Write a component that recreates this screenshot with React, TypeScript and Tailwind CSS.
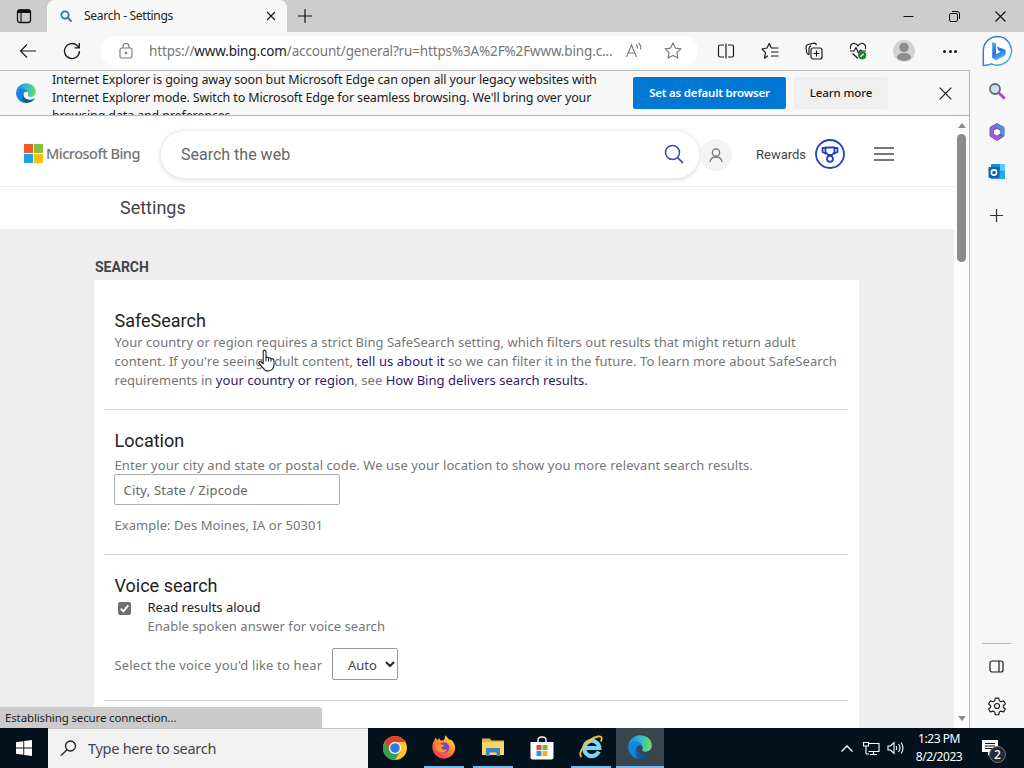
import type { ReactNode } from 'react';

function Svg({ size, children, className = '' }: { size: number; children: ReactNode; className?: string }) {
    return (
        <svg width={size} height={size} viewBox="0 0 24 24" fill="none" stroke="currentColor" strokeWidth="1.4" strokeLinecap="round" strokeLinejoin="round" className={`shrink-0 ${className}`}>
            {children}
        </svg>
    );
}

function EdgeLogo({ size, id }: { size: number; id: string }) {
    return (
        <svg width={size} height={size} viewBox="0 0 24 24" className="shrink-0">
            <defs>
                <linearGradient id={`${id}-top`} x1="1" y1="9" x2="23" y2="10" gradientUnits="userSpaceOnUse">
                    <stop offset="0" stopColor="#1f8fe0" />
                    <stop offset="0.5" stopColor="#2cbcd0" />
                    <stop offset="1" stopColor="#6ade63" />
                </linearGradient>
                <linearGradient id={`${id}-low`} x1="3" y1="10" x2="19" y2="22" gradientUnits="userSpaceOnUse">
                    <stop offset="0" stopColor="#0f78d8" />
                    <stop offset="1" stopColor="#114a8b" />
                </linearGradient>
            </defs>
            <path d="M0.3 11C1 4.5 6 0.2 12 0.2c7 0 11.8 4.6 11.8 10.3 0 4-2.900 6.200-6.400 6.200-2.700 0-3.800-1-3.100-2.200.6-1 .6-2.800-.5-4.300C12 7.700 9 6.500 6 7.100 3.300 7.600 1 9 .3 11z" fill={`url(#${id}-top)`} />
            <path d="M.3 11C1.500 7.500 5 6 8.500 6.800c3.200.7 5.200 2.700 5.500 4.700-1-1.300-3-1.700-4.200-.2-1.800 2.300-.5 6.500 3.200 8 3 1.200 6.600.8 9.200-.8.4-.2.7.1.4.5C20.200 22.300 16.500 24 12.500 23.900 5.500 23.700-.3 18 .3 11z" fill={`url(#${id}-low)`} />
            <path d="M.3 11C1.500 7.500 5 6 8.500 6.800c3.200.7 5.200 2.700 5.500 4.700-1-1.300-3-1.700-4.200-.2C6.500 13 6 20 10.300 23.700 4.200 23-.3 17.500.3 11z" fill="#168de2" opacity="0.75" />
        </svg>
    );
}

function BingChatLogo() {
    return (
        <svg width="32" height="32" viewBox="0 0 32 32">
            <defs>
                <linearGradient id="bubble" x1="2" y1="4" x2="30" y2="26" gradientUnits="userSpaceOnUse">
                    <stop offset="0" stopColor="#4d6fb5" />
                    <stop offset="0.5" stopColor="#3d7fd6" />
                    <stop offset="1" stopColor="#42c3c4" />
                </linearGradient>
                <linearGradient id="bee" x1="11" y1="7" x2="21" y2="25" gradientUnits="userSpaceOnUse">
                    <stop offset="0" stopColor="#35b6f4" />
                    <stop offset="0.55" stopColor="#2a6fe0" />
                    <stop offset="1" stopColor="#52c6f2" />
                </linearGradient>
            </defs>
            <path d="M16.500 1.500a14.300 14.300 0 1 1-6 27.400c-2 .9-5 1.600-8.200 1.500V16A14.400 14.400 0 0 1 16.500 1.500z" fill="#fdfeff" stroke="url(#bubble)" strokeWidth="1.500" />
            <path d="M11.200 7l3.800 1.400v10.800l5-2.500-2.700-1.200-1.400-3.900 7.600 2.800c1.200.6 1.500 1.800 1.400 3.400-.1 1.700-1 2.700-2 3.400L15 25.200l-3.800-2.300z" fill="url(#bee)" />
        </svg>
    );
}

function MsSquares({ size }: { size: number }) {
    return (
        <svg width={size} height={size} viewBox="0 0 19 19" className="shrink-0">
            <path fill="#f0592a" d="M0 0h9v9H0z" />
            <path fill="#87c13c" d="M10 0h9v9h-9z" />
            <path fill="#17a4e4" d="M0 10h9v9H0z" />
            <path fill="#fbbf12" d="M10 10h9v9h-9z" />
        </svg>
    );
}

function TitleBar() {
    return (
        <div className="flex h-8 bg-[#cdcdcd] text-black">
            <div className="flex w-[47px] items-center justify-center rounded-br-md">
                <svg width="16" height="16" viewBox="0 0 16 16">
                    <rect x="1.500" y="2" width="13" height="12.500" rx="2" fill="none" stroke="#111" strokeWidth="1.300" />
                    <path d="M1.500 5V3.500Q1.500 1.500 3.500 1.500h9q2 0 2 2V5z" fill="#111" />
                    <path d="M5 5v9.500" stroke="#111" strokeWidth="1.200" />
                </svg>
            </div>
            <div className="flex h-8 w-60 items-center rounded-t-lg bg-[#f7f7f7] pl-3">
                <svg width="14" height="14" viewBox="0 0 14 14" fill="none" stroke="#257a9d" strokeWidth="1.800">
                    <circle cx="6" cy="6" r="3.600" />
                    <path d="M8.700 8.700L12 12" strokeLinecap="round" />
                </svg>
                <span className="ml-[11px] w-[182px] text-[12px] tracking-[-0.28px] text-[#222]">Search - Settings</span>
                <svg width="10" height="10" viewBox="0 0 10 10" stroke="#111" strokeWidth="1.100">
                    <path d="M1 1l8 8M9 1L1 9" />
                </svg>
            </div>
            <div className="flex w-9 items-center justify-center">
                <svg width="14" height="14" viewBox="0 0 14 14" stroke="#111" strokeWidth="1.200">
                    <path d="M7 0v14M0 7h14" />
                </svg>
            </div>
            <div className="ml-auto flex items-center gap-[35px] pr-[18px]">
                <svg width="11" height="11" viewBox="0 0 11 11" stroke="#111">
                    <path d="M.5 5.500h10" />
                </svg>
                <svg width="11" height="11" viewBox="0 0 11 11" fill="none" stroke="#111">
                    <rect x=".5" y="2.500" width="8" height="8" rx="1.500" />
                    <path d="M3 .5h5q2.500 0 2.500 2.500v5" />
                </svg>
                <svg width="11" height="11" viewBox="0 0 11 11" stroke="#111" strokeWidth="1.100">
                    <path d="M.5.5l10 10M10.500.5l-10 10" />
                </svg>
            </div>
        </div>
    );
}

function Toolbar() {
    return (
        <div className="flex h-[39px] items-center border-b border-[#b9b9b9] text-[#1b1b1b]">
            <svg width="18" height="16" viewBox="0 0 18 16" fill="none" stroke="#1b1b1b" strokeWidth="1.200" className="ml-[19px]">
                <path d="M17 8H1.500M8 1.500L1.500 8 8 14.500" />
            </svg>
            <svg width="18" height="18" viewBox="0 0 18 18" fill="none" stroke="#1b1b1b" strokeWidth="1.300" className="ml-[26px]">
                <path d="M16.500 9A7.500 7.500 0 1 1 14.300 3.700L16 5.400M16.300 1v4.800h-4.800" />
            </svg>
            <div className="ml-5 flex h-[30px] w-[597px] items-center rounded-full bg-white">
                <svg width="14" height="16" viewBox="0 0 14 16" fill="none" stroke="#777" strokeWidth="1.100" className="ml-[18px]">
                    <rect x="1" y="5" width="12" height="10" rx="1.800" />
                    <path d="M4 5V3.500a3 3 0 0 1 6 0V5" />
                    <circle cx="7" cy="10" r=".7" fill="#777" />
                </svg>
                <span className="ml-4 w-[464px] text-[13.5px] tracking-[-0.15px] whitespace-nowrap text-[#767676]">
                    https://<span className="text-[#1b1b1b]">www.bing.com</span>/account/general?ru=https%3A%2F%2Fwww.bing.c...
                </span>
                <svg width="18" height="18" viewBox="0 0 18 18" fill="none" stroke="#777" strokeWidth="1.100" className="ml-3">
                    <path d="M1.500 15L6.500 3l5 12M3.300 11h6.500M11 2.500q2 1.500 1.500 4M13.500 1q3 2.500 2 6.500" />
                </svg>
                <Svg size={20} className="ml-5 text-[#777]">
                    <path d="M12 2.500l2.900 6 6.600.9-4.800 4.600 1.200 6.500L12 17.300l-5.900 3.200L7.300 14 2.500 9.400l6.600-.9z" />
                </Svg>
            </div>
            <svg width="18" height="16" viewBox="0 0 18 16" fill="none" stroke="#1b1b1b" strokeWidth="1.200" className="ml-[19px]">
                <path d="M7 2H3Q1.500 2 1.500 3.500v9Q1.500 14 3 14h4M11 2h4q1.500 0 1.500 1.500v9Q16.500 14 15 14h-4M9 .5v15" />
            </svg>
            <svg width="18" height="18" viewBox="0 0 18 18" fill="none" stroke="#1b1b1b" strokeWidth="1.200" className="ml-[26px]">
                <path d="M6.500 14L3.500 16.200l1-5.500L1 7l5-1 2.200-4.500L10.300 6H17M10.500 10H17M10.500 14H17" strokeLinecap="round" strokeLinejoin="round" />
            </svg>
            <svg width="18" height="18" viewBox="0 0 18 18" fill="none" stroke="#1b1b1b" strokeWidth="1.200" className="ml-[26px]">
                <rect x="6" y="6" width="11" height="11" rx="2" />
                <path d="M11.500 8.500v6M8.500 11.500h6M3.500 12.500Q2 12 1.700 10.500L1 5Q1 3 3 2.500L9 1.200q2-.2 2.500 2M6 3.500Q4 5 4 7v6" />
            </svg>
            <svg width="18" height="18" viewBox="0 0 18 18" fill="none" stroke="#1b1b1b" strokeWidth="1.200" className="ml-[26px]">
                <path d="M1.500 7C.5 3.500 3 1 5.500 1.500 7.500 1.700 8.500 3 9 4c.5-1 1.500-2.300 3.500-2.500C15 1 17.500 3.500 16.500 7M1 9h4l2-3.500L9.500 11l2-3 1 1H17M3.500 11.500L9 16.500" strokeLinejoin="round" />
                <circle cx="13.200" cy="13.300" r="4.100" fill="#16853a" stroke="none" />
                <path d="M11.500 14.700l3.200-3" stroke="#fff" />
            </svg>
            <svg width="22" height="22" viewBox="0 0 22 22" className="ml-[26px]">
                <circle cx="11" cy="11" r="11" fill="#d2d2d2" />
                <circle cx="11" cy="7.500" r="4.700" fill="#8c8c8c" />
                <ellipse cx="11" cy="17" rx="7" ry="3.900" fill="#8c8c8c" />
            </svg>
            <div className="ml-7 flex gap-[2.500px]">
                <i className="size-[3px] rounded-full bg-[#1b1b1b]" />
                <i className="size-[3px] rounded-full bg-[#1b1b1b]" />
                <i className="size-[3px] rounded-full bg-[#1b1b1b]" />
            </div>
        </div>
    );
}

function InfoBar() {
    return (
        <div className="flex h-[45px] items-center overflow-hidden border-b border-[#b5b5b5] bg-[#f7f7f7]">
            <div className="ml-4">
                <EdgeLogo size={20} id="bar" />
            </div>
            <p className="ml-4 h-11 w-[581px] text-[12.5px] leading-[18px] tracking-[-0.14px] whitespace-nowrap text-[#1b1b1b]">
                Internet Explorer is going away soon but Microsoft Edge can open all your legacy websites with
                <br />
                Internet Explorer mode. Switch to Microsoft Edge for seamless browsing. We'll bring over your
                <br />
                browsing data and preferences.
            </p>
            <button className="h-8 w-[153px] rounded-[2px] bg-[#0078d4] text-[11.5px] font-semibold tracking-[-0.2px] whitespace-nowrap text-white">Set as default browser</button>
            <button className="ml-2 h-8 w-[94px] rounded-[2px] bg-[#efefef] text-[11.5px] font-medium tracking-[-0.1px] whitespace-nowrap text-[#1b1b1b]">Learn more</button>
            <svg width="13" height="13" viewBox="0 0 13 13" stroke="#1b1b1b" strokeWidth="1.200" className="ml-[51px]">
                <path d="M.7.7l11.600 11.600M12.300.7L.7 12.300" />
            </svg>
        </div>
    );
}

function BingHeader() {
    return (
        <header className="flex h-[71px] items-center border-b border-[#ececec] bg-white">
            <div className="mt-[5px] ml-6">
                <MsSquares size={19} />
            </div>
            <span className="mt-[6px] ml-[3px] w-[94px] text-[14.5px] font-medium tracking-[-0.5px] whitespace-nowrap text-[#737373]">Microsoft Bing</span>
            <div className="mt-[6px] ml-5 flex h-[49px] w-[540px] items-center rounded-full border border-[#eee] bg-white pl-5 shadow-[0_1px_4px_rgba(0,0,0,0.14)]">
                <span className="mt-px w-[483px] font-[Roboto] text-[16px] text-[#666]">Search the web</span>
                <svg width="20" height="20" viewBox="0 0 20 20" fill="none" stroke="#3547b5" strokeWidth="1.500">
                    <circle cx="8.500" cy="8.500" r="7" />
                    <path d="M13.600 13.600l5 5" strokeLinecap="round" />
                </svg>
            </div>
            <div className="mt-[8px] flex size-8 items-center justify-center rounded-full bg-[#f3f3f3]">
                <svg width="16" height="16" viewBox="0 0 16 16" fill="none" stroke="#777" strokeWidth="1.300">
                    <circle cx="8" cy="5.500" r="3.700" />
                    <path d="M2 15c.5-3.500 3-5 6-5s5.500 1.500 6 5" />
                </svg>
            </div>
            <span className="mt-[8px] ml-6 w-[51px] font-[Roboto] text-[13px] text-[#444]">Rewards</span>
            <svg width="30" height="30" viewBox="0 0 30 30" fill="none" stroke="#2440c0" strokeWidth="1.800" className="mt-[6px] ml-2">
                <circle cx="15" cy="15" r="14" />
                <path d="M10.500 8.500h9v4.500l-2.500 3h-4l-2.500-3zM10.500 9H7.500v4l4 2M19.500 9h3v4l-4 2" strokeLinejoin="round" />
                <circle cx="15" cy="19.800" r="3" />
            </svg>
            <div className="mt-[6px] ml-[29px] flex w-5 flex-col gap-[4px]">
                <i className="h-[2px] bg-[#777]" />
                <i className="h-[2px] bg-[#777]" />
                <i className="h-[2px] bg-[#777]" />
            </div>
        </header>
    );
}

function SettingsPage() {
    return (
        <div className="w-[954px] shrink-0">
            <BingHeader />
            <div className="flex h-[42px] items-center bg-white pb-px pl-[120px] font-[Roboto] text-[18px] text-[#444]">Settings</div>
            <main className="h-[511px] rounded-tr bg-[#eee] pl-[94px]">
                <h2 className="h-[51px] pt-[28px] pl-px font-[Roboto] text-[14px] leading-5 font-bold text-[#444]">SEARCH</h2>
                <div className="w-[765px] bg-white pr-[11px] pl-[10px] text-[13px] leading-[19px] text-[#767676]">
                    <section className="h-[130px] border-b border-[#d4d4d4] pt-[29px] pl-[10.5px] whitespace-nowrap">
                        <h3 className="font-[Roboto] text-[18px] leading-6 text-[#222]">SafeSearch</h3>
                        <p className="tracking-[0.03px]">Your country or region requires a strict Bing SafeSearch setting, which filters out results that might return adult</p>
                        <p className="tracking-[0.07px]">
                            content. If you're seeing adult content, <a className="text-[#2f1770]">tell us about it</a> so we can filter it in the future. To learn more about SafeSearch
                        </p>
                        <p className="tracking-[0.03px]">
                            requirements in <a className="text-[#2f1770]">your country or region</a>, see <a className="text-[#2f1770]">How Bing delivers search results.</a>
                        </p>
                    </section>
                    <section className="h-[145px] border-b border-[#d4d4d4] pt-[19px] pl-[10.5px]">
                        <h3 className="font-[Roboto] text-[18px] leading-6 text-[#222]">Location</h3>
                        <p className="pt-[3px] tracking-[0.075px] whitespace-nowrap">Enter your city and state or postal code. We use your location to show you more relevant search results.</p>
                        <div className="-mt-px -ml-px flex h-[31px] w-[226px] items-center rounded-[2px] border border-[#adadad] bg-white pt-px pl-[9px] tracking-[0.2px] text-[#666]">City, State / Zipcode</div>
                        <p className="mt-[11px] tracking-[0.05px]">Example: Des Moines, IA or 50301</p>
                    </section>
                    <section className="h-[146px] border-b border-[#d4d4d4] pt-[19px] pl-[10.5px]">
                        <h3 className="font-[Roboto] text-[18px] leading-6 text-[#222]">Voice search</h3>
                        <div className="flex">
                            <svg width="13" height="13" viewBox="0 0 13 13" className="mt-1 ml-[3px]">
                                <rect width="13" height="13" rx="2" fill="#707070" />
                                <path d="M2.700 6.700l2.600 2.600 5-6" fill="none" stroke="#fff" strokeWidth="1.800" />
                            </svg>
                            <div className="ml-[17px]">
                                <p className="text-[#222]">Read results aloud</p>
                                <p className="tracking-[0.03px]">Enable spoken answer for voice search</p>
                            </div>
                        </div>
                        <div className="mt-3 flex items-center">
                            <span className="w-[217.5px] pt-[3px] tracking-[0.16px] whitespace-nowrap">Select the voice you'd like to hear</span>
                            <div className="flex h-8 w-[66px] items-center rounded-[2px] border border-[#999] pl-[15px] text-[#444]">
                                <span className="w-[37px] pt-[3px]">Auto</span>
                                <svg width="10" height="7" viewBox="0 0 10 7" fill="none" stroke="#222" strokeWidth="2">
                                    <path d="M1 1l4 4 4-4" />
                                </svg>
                            </div>
                        </div>
                    </section>
                    <div className="h-10" />
                </div>
            </main>
        </div>
    );
}

function Scrollbar() {
    return (
        <div className="flex w-[15px] flex-col items-center bg-[#fcfcfc] pt-[7px] pb-[7px]">
            <svg width="8" height="5" viewBox="0 0 8 5">
                <path d="M0 5l4-5 4 5z" fill="#8b8b8b" />
            </svg>
            <div className="mt-[6px] h-[128px] w-[9px] rounded-full bg-[#8b8b8b]" />
            <svg width="8" height="5" viewBox="0 0 8 5" className="mt-auto">
                <path d="M0 0l4 5 4-5z" fill="#8b8b8b" />
            </svg>
        </div>
    );
}

function Sidebar() {
    return (
        <aside className="flex w-[54px] flex-col items-center bg-[#f7f7f7] pt-[3px] pr-px">
            <BingChatLogo />
            <svg width="18" height="18" viewBox="0 0 18 18" fill="none" className="mt-[15px]">
                <path d="M10.500 10.500l2 2" stroke="#666" strokeWidth="2" />
                <path d="M12 12l3.800 3.800" stroke="#b044d8" strokeWidth="3" strokeLinecap="round" />
                <circle cx="7" cy="7" r="5" fill="#cde0ea" stroke="#666a70" strokeWidth="1.800" />
            </svg>
            <svg width="18" height="18" viewBox="0 0 18 18" className="mt-[23px]">
                <path d="M9 .5l7 4v8.500L9 17.500 2 13V4.500z" fill="#5359c5" stroke="#5359c5" strokeLinejoin="round" />
                <path d="M2 5L9 .7l2 1.300-4.500 4v6L2 13z" fill="#8c65cf" />
                <path d="M9 .5l7 4V13l-4-2V6L7 4z" fill="#4f8fdb" />
                <path d="M2 13l4.500-2L12 13l4-1-7 5.500z" fill="#a85bd1" />
                <path d="M9 5.700l3 1.700v3.400l-3 1.700-3-1.700V7.400z" fill="#f7f7f7" />
            </svg>
            <svg width="18" height="16" viewBox="0 0 18 16" className="mt-[23px]">
                <path fill="#1490df" d="M3 0h14v15H3z" />
                <path fill="#50d0ff" d="M12 0h5v7h-5z" />
                <path fill="#28a8ea" d="M9 11l8-5v9H5z" />
                <rect x=".5" y="3" width="11" height="11" rx="1" fill="#0f64a8" />
                <circle cx="6" cy="8.500" r="2.600" fill="none" stroke="#fff" strokeWidth="1.600" />
            </svg>
            <svg width="13" height="13" viewBox="0 0 13 13" stroke="#333" strokeWidth="1.200" className="mt-[29px]">
                <path d="M6.500 0v13M0 6.500h13" />
            </svg>
            <div className="mt-auto h-px w-[29px] bg-[#b5b5b5]" />
            <svg width="15" height="13" viewBox="0 0 15 13" fill="none" stroke="#1b1b1b" strokeWidth="1.200" className="mt-4">
                <rect x="1" y="1" width="13" height="11" rx="2" />
                <path d="M10 1v11" />
            </svg>
            <Svg size={20} className="mt-[23px] mb-3 text-[#1b1b1b]">
                <circle cx="12" cy="12" r="3" />
                <path d="M10 2.500h4l.8 3.300 2 1.100 3.200-1 2 3.500-2.400 2.300v1.600l2.400 2.300-2 3.500-3.200-1-2 1.100-.8 3.300h-4l-.8-3.300-2-1.100-3.200 1-2-3.500 2.400-2.300v-1.600L2 9.400l2-3.500 3.200 1 2-1.100z" />
            </Svg>
        </aside>
    );
}

function ChromeLogo() {
    return (
        <svg width="24" height="24" viewBox="0 0 24 24">
            <circle cx="12" cy="12" r="12" fill="#fbc52b" />
            <path d="M1.600 6A12 12 0 0 1 22.400 6H12a6 6 0 0 0-5.200 9z" fill="#df4034" />
            <path d="M1.600 6A12 12 0 0 0 12 24l5.200-9A6 6 0 0 1 6.800 15z" fill="#2fa24f" />
            <circle cx="12" cy="12" r="6" fill="#fff" />
            <circle cx="12" cy="12" r="4.800" fill="#2f7be6" />
        </svg>
    );
}

function FirefoxLogo() {
    return (
        <svg width="24" height="24" viewBox="0 0 24 24">
            <defs>
                <linearGradient id="fox" x1="19" y1="2" x2="5" y2="22" gradientUnits="userSpaceOnUse">
                    <stop offset="0" stopColor="#ffe14a" />
                    <stop offset="0.45" stopColor="#ff8a26" />
                    <stop offset="1" stopColor="#f0306a" />
                </linearGradient>
            </defs>
            <path d="M2.500 5l1-2.500L5.500 5l2.200-1.700.8 2.200L12 5.200l1.500-5 3 3.800 3.500 1.500c3 3.500 4 7 2.500 11A11.500 11.500 0 0 1 .5 14C0 10.500.8 7.500 2.500 5z" fill="url(#fox)" />
            <circle cx="12" cy="12.500" r="5.300" fill="#7a45c9" />
            <path d="M4 9.500c2-1.500 4-1.300 5.500 0l2.800.4c-.5 1.600-2.600 1.600-2.800 3.100 1 2 4 2.500 6 .5-1 5-9 6-12-1z" fill="#ff9424" />
        </svg>
    );
}

function Taskbar() {
    return (
        <footer className="flex h-10 bg-[#03121d] text-white">
            <div className="flex w-12 items-center justify-center">
                <svg width="16" height="16" viewBox="0 0 16 16" fill="#fff">
                    <path d="M0 2.300L7.300 1.300v6.300H0zM8.200 1.100L16 0v7.600H8.200zM0 8.500h7.300v6.300L0 13.800zM8.200 8.500H16V16l-7.800-1.100z" />
                </svg>
            </div>
            <div className="flex w-80 items-center border-t border-[#c5c5c5] bg-[#f1f1f1] text-[#444]">
                <svg width="17" height="17" viewBox="0 0 17 17" fill="none" stroke="#222" strokeWidth="1.300" className="ml-3">
                    <circle cx="10.500" cy="6" r="5" />
                    <path d="M7 9.700L.8 15.800" />
                </svg>
                <span className="ml-[11px] text-[14.5px] tracking-[-0.28px] whitespace-nowrap">Type here to search</span>
            </div>
            <div className="ml-[3px] flex">
                <div className="flex w-12 items-center justify-center">
                    <ChromeLogo />
                </div>
                <div className="flex w-[49px] justify-center">
                    <div className="flex w-10 items-center justify-center border-b-2 border-[#76b9ed]">
                        <FirefoxLogo />
                    </div>
                </div>
                <div className="flex w-[49px] justify-center">
                    <div className="flex w-10 items-center justify-center border-b-2 border-[#76b9ed]">
                        <svg width="22" height="20" viewBox="0 0 22 20">
                            <path d="M0 1.500h8l1.500 2H22V18H0z" fill="#e8b13f" />
                            <path d="M0 5h22v13H0z" fill="#fbd667" />
                            <path d="M4 11h14v8h-3.500v-3.500h-7V19H4z" fill="#3a86c8" />
                        </svg>
                    </div>
                </div>
                <div className="flex w-[49px] items-center justify-center">
                    <svg width="24" height="24" viewBox="0 0 24 24">
                        <path d="M8 6V4q0-3 4-3t4 3v2" fill="none" stroke="#fff" strokeWidth="1.400" />
                        <path d="M.5 6h23v15.500q0 2-2 2h-19q-2 0-2-2z" fill="#fff" />
                        <path fill="#e2502c" d="M6.500 9h5v5h-5z" />
                        <path fill="#7eb536" d="M12.500 9h5v5h-5z" />
                        <path fill="#2299d6" d="M6.500 15h5v5h-5z" />
                        <path fill="#f3b51f" d="M12.500 15h5v5h-5z" />
                    </svg>
                </div>
                <div className="flex w-[49px] justify-center">
                    <div className="flex w-10 items-center justify-center border-b-2 border-[#76b9ed]">
                        <svg width="24" height="24" viewBox="0 0 24 24" fill="none">
                            <path d="M19.800 16.500a7.600 7.600 0 1 1 .6-3.500H7" stroke="#7ad8f8" strokeWidth="4" />
                            <path d="M2.500 22C-2 18 8 4 19 1.500c4-.8 4.500 2 2.800 5" stroke="#f2c531" strokeWidth="1.800" />
                        </svg>
                    </div>
                </div>
                <div className="ml-px flex w-12 items-center justify-center border-b-2 border-[#76b9ed] bg-[#39444d]">
                    <EdgeLogo size={24} id="task" />
                </div>
            </div>
            <div className="ml-auto flex items-center pr-px">
                <svg width="12" height="7" viewBox="0 0 12 7" fill="none" stroke="#fff" strokeWidth="1.300">
                    <path d="M.5 6.500L6 1l5.500 5.500" />
                </svg>
                <svg width="17" height="15" viewBox="0 0 17 15" fill="none" stroke="#fff" strokeWidth="1.100" className="ml-[10px]">
                    <path d="M5.500 2.500H16v8H5.500M10.500 10.500v3M7 13.500h7M3 5v8M.5 1.500h5v3.500h-5zM3 13h3" />
                </svg>
                <svg width="17" height="14" viewBox="0 0 17 14" fill="none" stroke="#fff" strokeWidth="1.100" className="ml-[7px]">
                    <path d="M1 5h2.500L7 1.500v11L3.500 9H1zM9 5q1.500 2 0 4M11.500 3q3 4 0 8M14 1.500q4 5.500 0 11" />
                </svg>
                <div className="ml-[7px] w-[56px] text-center text-[12px] leading-[18px] tracking-[-0.45px] whitespace-nowrap">
                    <div>1:23 PM</div>
                    <div>8/2/2023</div>
                </div>
                <div className="relative ml-3 h-6 w-11">
                    <svg width="17" height="18" viewBox="0 0 17 18" className="mt-[3px] ml-[3px]">
                        <path d="M0 1h16v12H9.500L6 17v-4H0z" fill="#fff" />
                        <path d="M3 4.500h10M3 7h10M3 9.500h7" stroke="#03121d" />
                    </svg>
                    <span className="absolute top-[10px] left-[10px] flex size-[17px] items-center justify-center rounded-full border border-[#777] bg-[#222b33] text-[12px] font-medium">2</span>
                </div>
            </div>
        </footer>
    );
}

export default function App() {
    return (
        <div className="relative h-[768px] w-[1024px] overflow-hidden bg-[#f7f7f7] font-['Noto_Sans',sans-serif]">
            <TitleBar />
            <div className="flex h-[696px]">
                <div className="w-[970px]">
                    <Toolbar />
                    <div className="h-[657px] overflow-hidden border-r border-[#b5b5b5]">
                        <InfoBar />
                        <div className="flex h-[612px] overflow-hidden">
                            <SettingsPage />
                            <Scrollbar />
                        </div>
                    </div>
                </div>
                <Sidebar />
            </div>
            <Taskbar />

            {/* loading status bubble */}
            <div className="absolute top-[707px] left-0 flex h-[21px] w-[322px] items-center rounded-tr-[3px] bg-[#cbcbcb] pl-[5px] text-[11.5px] tracking-[-0.14px] whitespace-nowrap text-[#222]">Establishing secure connection...</div>

            {/* pointer */}
            <svg width="18" height="24" viewBox="0 0 18 24" className="absolute top-[349px] left-[258px]">
                <path d="M5.200 2q1.400-1.700 2.800 0v6.500q1.300-1 2.500.5 1.500-.8 2.500.8 1.700-.7 2.500.8.8 1.500.6 5-.3 3-1.700 4.500-2 2-4.900 2Q7 22.100 5.200 19L1 14.500q-.7-1.700 1-2l3.200 2z" fill="#fff" stroke="#222" strokeWidth="1.100" />
                <path d="M8 8.500v4M10.500 9v3.500M13 9.800v3" stroke="#222" />
            </svg>
        </div>
    );
}
